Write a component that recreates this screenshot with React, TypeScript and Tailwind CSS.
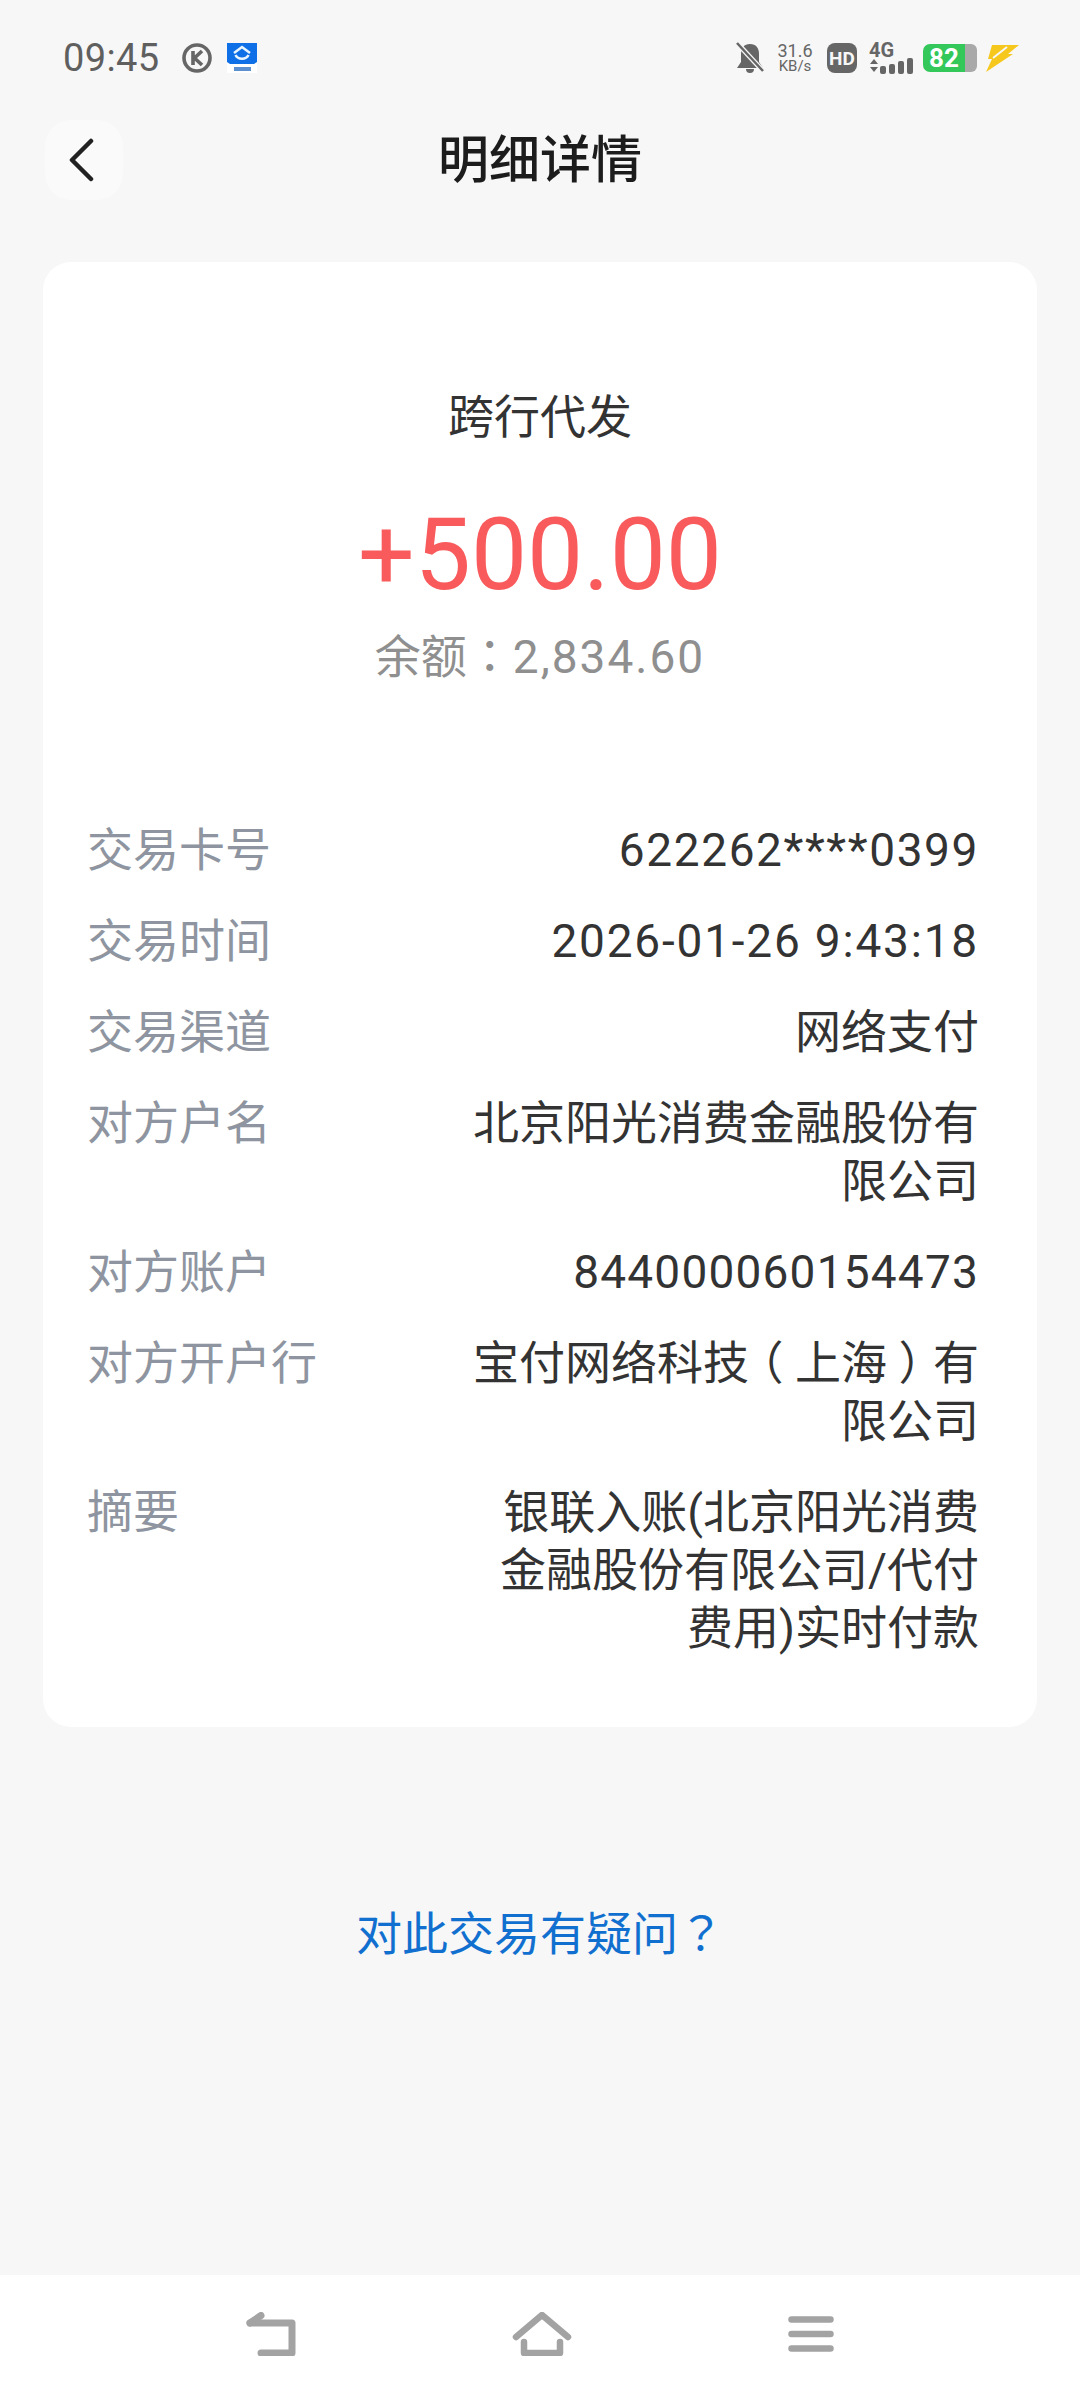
import type { ReactNode } from 'react';

const FONT = 'Roboto, "Noto Sans CJK SC", sans-serif';

function P({ children }: { children: ReactNode }) {
  return <span className="font-['Noto_Sans_CJK_TC']">{children}</span>;
}

function Bracket({ children }: { children: ReactNode }) {
  return <span className="inline-block w-[46px] text-center [font-feature-settings:'halt']">{children}</span>;
}

function Row({ label, value }: { label: string; value: ReactNode }) {
  return (
    <div className="flex justify-between">
      <div className="text-[46px] leading-[58px] text-[#8e95a0] whitespace-nowrap">{label}</div>
      <div className="w-[512px] text-right text-[46px] leading-[58px] text-[#333333]">{value}</div>
    </div>
  );
}

function StatusBar() {
  return (
    <div className="h-[116px] shrink-0 flex items-center justify-between pl-[63px] pr-[60px]">
      <div className="flex items-center">
        <span className="text-[38px] text-[#5f5f5f] tracking-[0.4px]">09:45</span>
        <svg className="ml-[22px]" width="30" height="30" viewBox="0 0 30 30">
          <circle cx="15" cy="15" r="13" fill="none" stroke="#666" strokeWidth="3.6" />
          <path d="M11 8v14M20 8l-7.5 7 7.5 7" fill="none" stroke="#666" strokeWidth="3.6" />
        </svg>
        <svg className="ml-[15px]" width="30" height="30" viewBox="0 0 30 30">
          <rect width="30" height="30" fill="#ffffff" />
          <path d="M0 0h30v19l-3 2H3l-3-2z" fill="#0f6fe6" />
          <path d="M7 10l8-6 8 6" fill="none" stroke="#e8f4ff" strokeWidth="2.5" />
          <path d="M8.5 12a7 6 0 0 0 13 0" fill="none" stroke="#e8f4ff" strokeWidth="2.5" />
          <rect x="7" y="24" width="17" height="4" fill="#5b8fd0" />
        </svg>
      </div>
      <div className="flex items-center">
        <svg width="28" height="32" viewBox="0 0 28 32">
          <path d="M14 2c6 0 9 4 9 10v8l4 6H1l4-6v-8C5 6 8 2 14 2zM10 27h8a4 4 0 0 1-8 0z" fill="#666" />
          <path d="M2 2l25 27" stroke="#f7f7f7" strokeWidth="5" />
          <path d="M1 1l26 28" stroke="#666" strokeWidth="2.5" />
        </svg>
        <div className="ml-[12px] w-[38px] flex flex-col items-center text-[#666] leading-none">
          <span className="text-[18px] leading-[17px]">31.6</span>
          <span className="text-[15px] leading-[15px]">KB/s</span>
        </div>
        <div className="ml-[13px] w-[30px] h-[30px] rounded-[8px] bg-[#666] flex items-center justify-center text-[#f7f7f7] text-[19px] font-bold leading-none">HD</div>
        <div className="ml-[12px] flex flex-col w-[44px]">
          <span className="text-[#666] text-[20px] leading-[15px] font-bold">4G</span>
          <svg width="44" height="16" viewBox="0 0 44 16">
            <path d="M1 6l4-5 4 5zM1 9l4 5 4-5z" fill="#666" />
            <rect x="11" y="8" width="6" height="8" rx="2" fill="#666" />
            <rect x="20" y="6" width="6" height="10" rx="2" fill="#666" />
            <rect x="29" y="3" width="6" height="13" rx="2" fill="#666" />
            <rect x="38" y="0" width="6" height="16" rx="2" fill="#666" />
          </svg>
        </div>
        <div className="ml-[10px] w-[42px] h-[28px] rounded-l-[7px] bg-[#34c759] flex items-center justify-center text-white text-[26px] font-bold leading-none">82</div>
        <div className="w-[12px] h-[28px] bg-[#a9a9a9] rounded-r-[6px]" />
        <svg className="ml-[9px]" width="34" height="28" viewBox="0 0 34 28">
          <path d="M6 1H33L22 10H27L0 28L6 15H2z" fill="#f6c81e" />
          <path d="M7 14L21 3" stroke="#f7f7f7" strokeWidth="2" />
        </svg>
      </div>
    </div>
  );
}

export default function App() {
  return (
    <div className="w-[1080px] h-[2400px] bg-[#f7f7f7] flex flex-col" style={{ fontFamily: FONT }}>
      <StatusBar />
      <div className="h-[86px] shrink-0 relative flex items-center justify-center">
        <div className="absolute left-[45px] top-[4px] w-[78px] h-[80px] rounded-[26px] bg-[#fafafa] flex items-center justify-center">
          <svg width="26" height="44" viewBox="0 0 26 44" className="mr-[6px]">
            <path d="M23 3L4 22l19 19" fill="none" stroke="#222" strokeWidth="4.5" strokeLinecap="round" strokeLinejoin="round" />
          </svg>
        </div>
        <h1 className="text-[51px] font-medium text-[#1c1c1c] leading-none mt-[3px]">明细详情</h1>
      </div>

      <div className="mx-[43px] mt-[60px] h-[1465px] shrink-0 bg-white rounded-[28px] flex flex-col">
        <div className="mt-[125px] text-center text-[46px] leading-[60px] text-[#333]">跨行代发</div>
        <div className="mt-[53px] text-center text-[100px] leading-[110px] text-[#f95a5c]">+500.00</div>
        <div className="mt-[13px] text-center text-[46px] leading-[60px] text-[#8f8f8f]">余额<P>：</P><span className="tracking-[2px]">2,834.60</span></div>
        <div className="mt-[134px] pl-[44px] pr-[58px] flex flex-col gap-[33px]">
          <Row label="交易卡号" value={<span className="tracking-[1.6px]">622262****0399</span>} />
          <Row label="交易时间" value={<span className="tracking-[1.8px]">2026-01-26 9:43:18</span>} />
          <Row label="交易渠道" value="网络支付" />
          <Row label="对方户名" value="北京阳光消费金融股份有限公司" />
          <Row label="对方账户" value={<span className="tracking-[1.2px]">844000060154473</span>} />
          <Row label="对方开户行" value={<>宝付网络科技<Bracket>（</Bracket>上海<Bracket>）</Bracket>有限公司</>} />
          <Row label="摘要" value="银联入账(北京阳光消费金融股份有限公司/代付费用)实时付款" />
        </div>
      </div>

      <div className="mt-[173px] text-center text-[46px] leading-[60px] text-[#1170cf]">
        对此交易有疑问<span className="inline-block w-[46px] text-left font-['Noto_Sans_CJK_TC'] [font-feature-settings:'halt']">？</span>
      </div>

      <div className="mt-auto h-[125px] bg-white flex items-center justify-center gap-[216px] pb-[7px]">
        <svg width="50" height="44" viewBox="0 0 50 44" fill="none" stroke="#a3a3a3" strokeWidth="7" strokeLinecap="round" strokeLinejoin="round">
          <path d="M4 11H46V41H15" />
          <path d="M4 11L15 3.5" />
        </svg>
        <svg width="60" height="44" viewBox="0 0 60 44" fill="none" stroke="#a3a3a3" strokeWidth="6.5" strokeLinecap="round" strokeLinejoin="round">
          <path d="M4 25L30 3l26 22" />
          <path d="M12 30V41H48V30" />
        </svg>
        <svg width="46" height="36" viewBox="0 0 46 36" fill="none" stroke="#a3a3a3" strokeWidth="6.5" strokeLinecap="round">
          <path d="M3.5 3.5H42.5M3.5 18H42.5M3.5 32.5H42.5" />
        </svg>
      </div>
    </div>
  );
}
